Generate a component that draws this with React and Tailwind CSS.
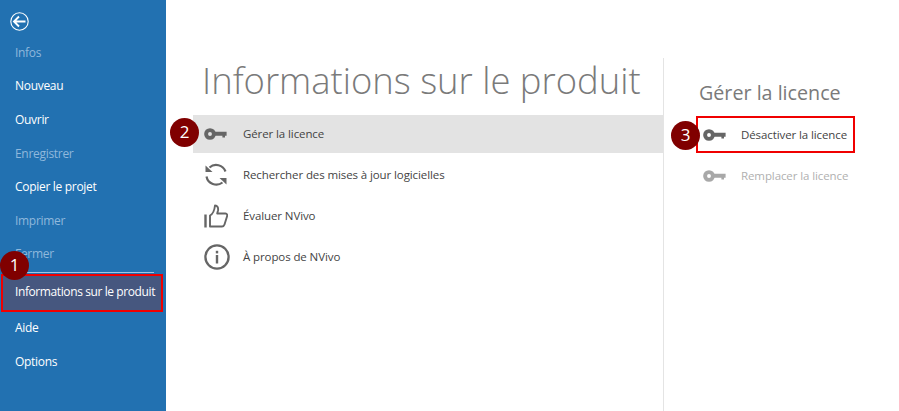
import React from "react";

function Key({ className = "", color = "#666" }) {
  return (
    <svg className={className} width="23" height="12" viewBox="0 0 23 12" fill="none">
      <circle cx="6" cy="6" r="3.9" stroke={color} strokeWidth="3.9" />
      <path d="M10 3.8H22.6V7.8H21V9.4H18.4V7.8H10Z" fill={color} />
    </svg>
  );
}

function Refresh() {
  return (
    <svg width="24" height="24" viewBox="0 0 24 24" fill="none" stroke="#666" strokeWidth="2.2">
      <path d="M21.5 8.5A10 10 0 0 0 5.5 4.5" />
      <path d="M1.5 2.5L8.5 9H1.5Z" fill="#666" stroke="none" />
      <path d="M2.5 13.5A10 10 0 0 0 18.5 19.5" />
      <path d="M22.5 21.5L15.5 15H22.5Z" fill="#666" stroke="none" />
    </svg>
  );
}

function Thumb() {
  return (
    <svg width="24" height="24" viewBox="0 0 24 24" fill="none" stroke="#666" strokeWidth="1.9">
      <path d="M1.5 10.5V23.5" strokeWidth="2.4" />
      <path d="M6 11.5C9 10 10.5 6 11 1.5C13.5 1.5 14.5 4 14 6.5L13.2 9.5H21.5C23 9.5 23.5 11 23 12.5L20.5 20.5C20 22 19 22.5 18 22.5H6Z" strokeLinejoin="round" />
    </svg>
  );
}

function Info() {
  return (
    <svg width="26" height="26" viewBox="0 0 26 26" fill="none">
      <circle cx="13" cy="13" r="11.6" stroke="#666" strokeWidth="2.3" />
      <rect x="11.8" y="11" width="2.4" height="8.5" fill="#666" />
      <rect x="11.8" y="6.8" width="2.4" height="2.6" fill="#666" />
    </svg>
  );
}

function Badge({ n, className }) {
  return (
    <div className={`absolute w-[29px] h-[29px] rounded-full bg-[#800000] text-white text-[17px] leading-[28px] text-center ${className}`}>
      {n}
    </div>
  );
}

const Side = ({ children, dim }) => (
  <div className={`h-[33.6px] flex items-center pl-[15px] text-[12px] tracking-[-0.3px] ${dim ? "text-[#8fb8dc]" : "text-white"}`}>
    {children}
  </div>
);

const Label = ({ children, color = "text-[#444]" }) => (
  <span className={`text-[11.5px] tracking-[-0.1px] whitespace-nowrap ${color}`}>{children}</span>
);

const Row = ({ icon, children }) => (
  <div className="h-[41px] flex items-center">
    <div className="w-[50px] pl-[11px]">{icon}</div>
    <Label>{children}</Label>
  </div>
);

export default function App() {
  return (
    <div className="relative w-[899px] h-[411px] bg-white flex overflow-hidden" style={{ fontFamily: '"Open Sans", "Noto Sans", sans-serif' }}>
      <aside className="w-[166px] h-full bg-[#2271b1] shrink-0 flex flex-col">
        <div className="h-[36px] pt-[12px] pl-[10px]">
          <svg width="19" height="19" viewBox="0 0 19 19" fill="none" stroke="white">
            <circle cx="9.5" cy="9.5" r="8.7" strokeWidth="1.1" />
            <path d="M15.5 9.5H4M9 4.5L4 9.5L9 14.5" strokeWidth="1.9" />
          </svg>
        </div>
        <Side dim>Infos</Side>
        <Side>Nouveau</Side>
        <Side>Ouvrir</Side>
        <Side dim>Enregistrer</Side>
        <Side>Copier le projet</Side>
        <Side dim>Imprimer</Side>
        <Side dim>Fermer</Side>
        <div className="h-px bg-[#9fc3e2] ml-[15px] mr-[12px] mt-[0.5px]" />
        <div className="h-[38px] mr-[3px] ml-[1px] mt-[1px] pb-[1px] flex items-center pl-[12px] text-white text-[12px] tracking-[-0.4px] bg-[#46577f] border-2 border-[#f00000] whitespace-nowrap">
          Informations sur le produit
        </div>
        <Side>Aide</Side>
        <Side>Options</Side>
      </aside>

      <main className="w-[497px] pt-[56px] shrink-0">
        <h1 className="pl-[36px] text-[36.4px] leading-[48px] text-[#7a7a7a] font-light whitespace-nowrap">Informations sur le produit</h1>
        <div className="mt-[11px] ml-[27px]">
          <div className="bg-[#e3e3e3] h-[38px] flex items-center">
            <div className="w-[50px] pl-[11px]"><Key /></div>
            <Label>Gérer la licence</Label>
          </div>
          <div className="pt-[1px]">
            <Row icon={<Refresh />}>Rechercher des mises à jour logicielles</Row>
            <Row icon={<Thumb />}>Évaluer NVivo</Row>
            <Row icon={<Info />}>À propos de NVivo</Row>
          </div>
        </div>
      </main>

      <section className="flex-1 border-l border-[#e4e4e4] mt-[58px] pt-[21px] pl-[35px]">
        <h2 className="text-[19.7px] leading-[28px] text-[#7a7a7a] font-normal whitespace-nowrap">Gérer la licence</h2>
        <div className="mt-[9px] ml-[-3px] w-[159px] h-[37px] border-2 border-[#f00000] flex items-center pl-[5px]">
          <Key className="mr-[15px]" />
          <Label>Désactiver la licence</Label>
        </div>
        <div className="mt-[4px] ml-[-3px] h-[37px] flex items-center pl-[7px]">
          <Key className="mr-[15px]" color="#a8a8a8" />
          <Label color="text-[#b0b0b0]">Remplacer la licence</Label>
        </div>
      </section>

      <Badge n="1" className="left-0 top-[251px]" />
      <Badge n="2" className="left-[170px] top-[118px]" />
      <Badge n="3" className="left-[671px] top-[121px]" />
    </div>
  );
}
